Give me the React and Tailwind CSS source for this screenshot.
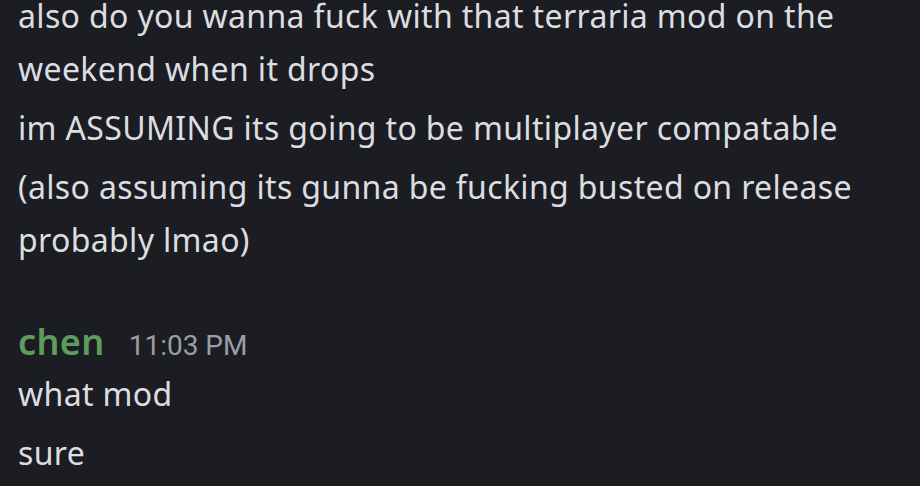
export default function App() {
  return (
    <div
      className="w-[920px] h-[486px] overflow-hidden bg-[#1c1d22] text-[#dcdde1]"
      style={{ fontFamily: '"Noto Sans", sans-serif' }}
    >
      <div className="-mt-[11px] pl-[18px] pr-4">
        {/* previous message group */}
        <div className="flex flex-col gap-[6px] text-[32px] leading-[53px] tracking-[0.35px]">
          <p>also do you wanna fuck with that terraria mod on the weekend when it drops</p>
          <p>im ASSUMING its going to be multiplayer compatable</p>
          <p>(also assuming its gunna be fucking busted on release probably lmao)</p>
        </div>

        {/* chen */}
        <div className="mt-[51px]">
          <div className="flex items-baseline gap-[24px]">
            <span className="text-[36px] leading-[50px] font-semibold tracking-[0.4px] text-[#5c9d5e]">chen</span>
            <span
              className="text-[28px] text-[#9b9da5]"
              style={{ fontFamily: 'Roboto, sans-serif' }}
            >
              11:03 PM
            </span>
          </div>
          <div className="flex flex-col gap-[6px] text-[32px] leading-[53px] tracking-[0.35px]">
            <p>what mod</p>
            <p>sure</p>
          </div>
        </div>
      </div>
    </div>
  );
}
